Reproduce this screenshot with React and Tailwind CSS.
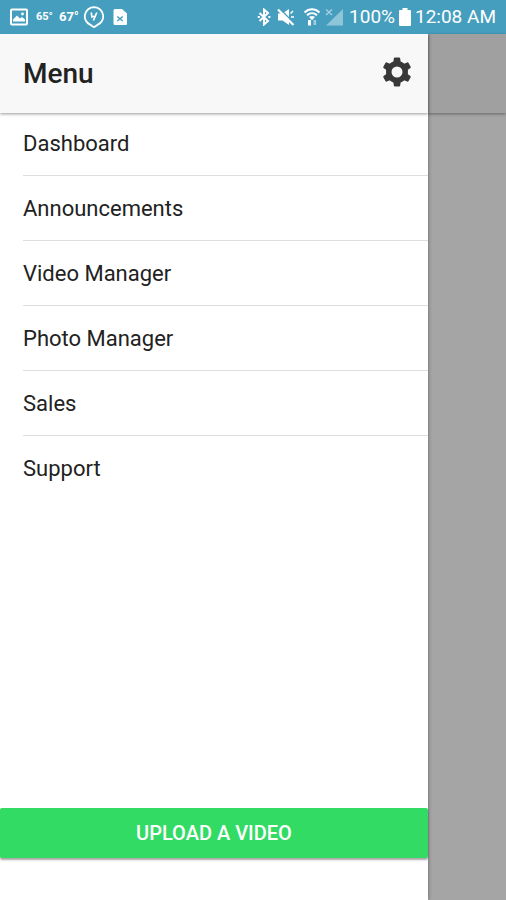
import React from "react";

const menuItems = [
  "Dashboard",
  "Announcements",
  "Video Manager",
  "Photo Manager",
  "Sales",
  "Support",
];

const toothAngles = [0, 60, 120, 180, 240, 300];

const GearIcon = () => (
  <svg className="size-[30px]" viewBox="-15 -15 30 30">
    <circle r="8.2" fill="none" stroke="currentColor" strokeWidth="5.4" />
    {toothAngles.map((angle) => (
      <path
        key={angle}
        d="M-5.5-8.5L-3.6-10.2-3.2-13.6Q-3-14.5-2.2-14.5H2.2Q3-14.5 3.2-13.6L3.6-10.2 5.5-8.5z"
        fill="currentColor"
        transform={`rotate(${angle})`}
      />
    ))}
  </svg>
);

const StatusBar = () => (
  <div className="flex h-[34px] shrink-0 items-center justify-between bg-[#459ebe] px-2.5 text-white">
    <div className="flex items-center">
      {/* Gallery */}
      <svg className="h-[18px] w-[18px]" viewBox="0 0 18 18" fill="none">
        <rect x="1" y="1.5" width="16" height="15" rx="1" stroke="currentColor" strokeWidth="2" />
        <path d="M3 13.5v-2l4-4 3 3 2-1.5 3 2.500v2z" fill="currentColor" />
        <circle cx="12.5" cy="6" r="1.4" fill="currentColor" />
      </svg>
      <span className="ml-2 text-[11px] font-bold">65°</span>
      <span className="ml-1.5 text-[13px] font-bold">67°</span>
      {/* Badge with a pointed bottom */}
      <svg className="ml-1 h-[22px] w-[22px]" viewBox="0 0 22 22" fill="none" stroke="currentColor">
        <path d="M11 1.200a9.200 9.200 0 0 1 3.500 17.700L11 21.200l-3.500-2.300A9.200 9.200 0 0 1 11 1.200z" strokeWidth="1.8" />
        <path d="M8.200 6.500l.8 4.500 2.400-.8M13.800 6.500L10.400 14.500" strokeWidth="1.7" />
      </svg>
      {/* File with a cross */}
      <svg className="ml-2 h-[18px] w-[14px]" viewBox="0 0 14 18">
        <path d="M2 1h7l5 4.500V16a1 1 0 0 1-1 1H2a1.500 1.500 0 0 1-1.500-1.500v-13A1.500 1.500 0 0 1 2 1z" fill="currentColor" />
        <path d="M4.300 8.500l5.400 4.500M9.700 8.500l-5.400 4.500" stroke="#459ebe" strokeWidth="1.5" />
      </svg>
    </div>

    <div className="flex items-center">
      {/* Bluetooth */}
      <svg className="h-[18px] w-[14px]" viewBox="0 0 14 18" fill="none" stroke="currentColor" strokeWidth="2">
        <path d="M2.500 5l8.500 8L7 16.500v-15L11 5l-8.500 8" />
        <path d="M.8 9h2M11.400 9h2" />
      </svg>
      {/* Muted speaker */}
      <svg className="ml-1.5 h-[18px] w-[18px]" viewBox="0 0 18 18">
        <path d="M1 5.500h4.500L12 1v16l-6.500-4.500H1z" fill="currentColor" />
        <path d="M2.800 .8l14.400 14.400" stroke="#459ebe" strokeWidth="1.5" />
        <path d="M1 1.500l15.500 15.500" stroke="currentColor" strokeWidth="2.2" />
        <path d="M13.500 5.500l2.500-2.500M14 9h3" stroke="currentColor" strokeWidth="1.5" />
      </svg>
      {/* Wi-Fi with traffic arrows */}
      <svg className="ml-2 h-[20px] w-[18px]" viewBox="0 0 18 20" fill="none" stroke="currentColor" strokeWidth="2">
        <path d="M1.500 5.500c4.500-4.200 10.500-4.200 15 0" />
        <path d="M4 8.300c3-2.800 7-2.800 10 0" />
        <path d="M6 10c2-1.500 4-1.500 6 0L9 13.200z" fill="currentColor" stroke="none" />
        <path d="M6.500 13v5.500" strokeWidth="3" />
        <path d="M11.800 13v5" strokeWidth="2.5" opacity="0.5" />
      </svg>
      {/* No signal */}
      <svg className="ml-1 h-[18px] w-[18px]" viewBox="0 0 18 18">
        <path d="M18 1v16.500H1z" fill="currentColor" opacity="0.4" />
        <path d="M1 1.500l6 5.500M7 1.500l-6 5.500" stroke="currentColor" strokeWidth="1.5" opacity="0.5" />
      </svg>
      <span className="ml-1.5 text-[19px]">100%</span>
      {/* Battery */}
      <svg className="ml-1 h-[18px] w-[12px]" viewBox="0 0 12 18" fill="currentColor">
        <path d="M3.500 0h5v2H11a1 1 0 0 1 1 1v14a1 1 0 0 1-1 1H1a1 1 0 0 1-1-1V3a1 1 0 0 1 1-1h2.500z" />
      </svg>
      <span className="ml-1 text-[19px]">12:08 AM</span>
    </div>
  </div>
);

const App = () => {
  return (
    <div className="flex min-h-screen flex-col bg-[#a5a5a5] font-['Roboto',sans-serif] text-[#222]">
      <StatusBar />

      <div className="flex flex-1">
        {/* Side menu */}
        <aside className="z-10 flex flex-1 flex-col bg-white shadow-[0_0_4px_rgba(0,0,0,0.4)] [clip-path:inset(0_-8px_0_0)]">
          <header className="z-10 flex h-[79px] items-center justify-between bg-[#f8f8f8] pl-[23px] pr-4 shadow-[0_1px_3px_rgba(0,0,0,0.4)]">
            <h1 className="text-[28px] font-medium">Menu</h1>
            <button type="button" aria-label="Settings" className="pb-1 text-[#383838]">
              <GearIcon />
            </button>
          </header>

          <nav className="flex-1">
            <ul className="-mt-0.5 pl-[23px]">
              {menuItems.map((item) => (
                <li key={item} className="border-b border-[#dedede] last:border-b-0">
                  <a href="#" className="flex h-16 items-center text-[22px]">
                    {item}
                  </a>
                </li>
              ))}
            </ul>
          </nav>

          <button
            type="button"
            className="mb-[42px] h-[50px] w-full rounded-xs bg-[#32db64] text-[20px] font-medium text-white shadow-[0_2px_2px_rgba(0,0,0,0.35)]"
          >
            UPLOAD A VIDEO
          </button>
        </aside>

        {/* Dimmed page behind the menu */}
        <div className="w-[78px] shrink-0">
          <div className="h-[79px] bg-[#a0a0a0] shadow-[0_1px_3px_rgba(0,0,0,0.4)]" />
        </div>
      </div>
    </div>
  );
};

export default App;
